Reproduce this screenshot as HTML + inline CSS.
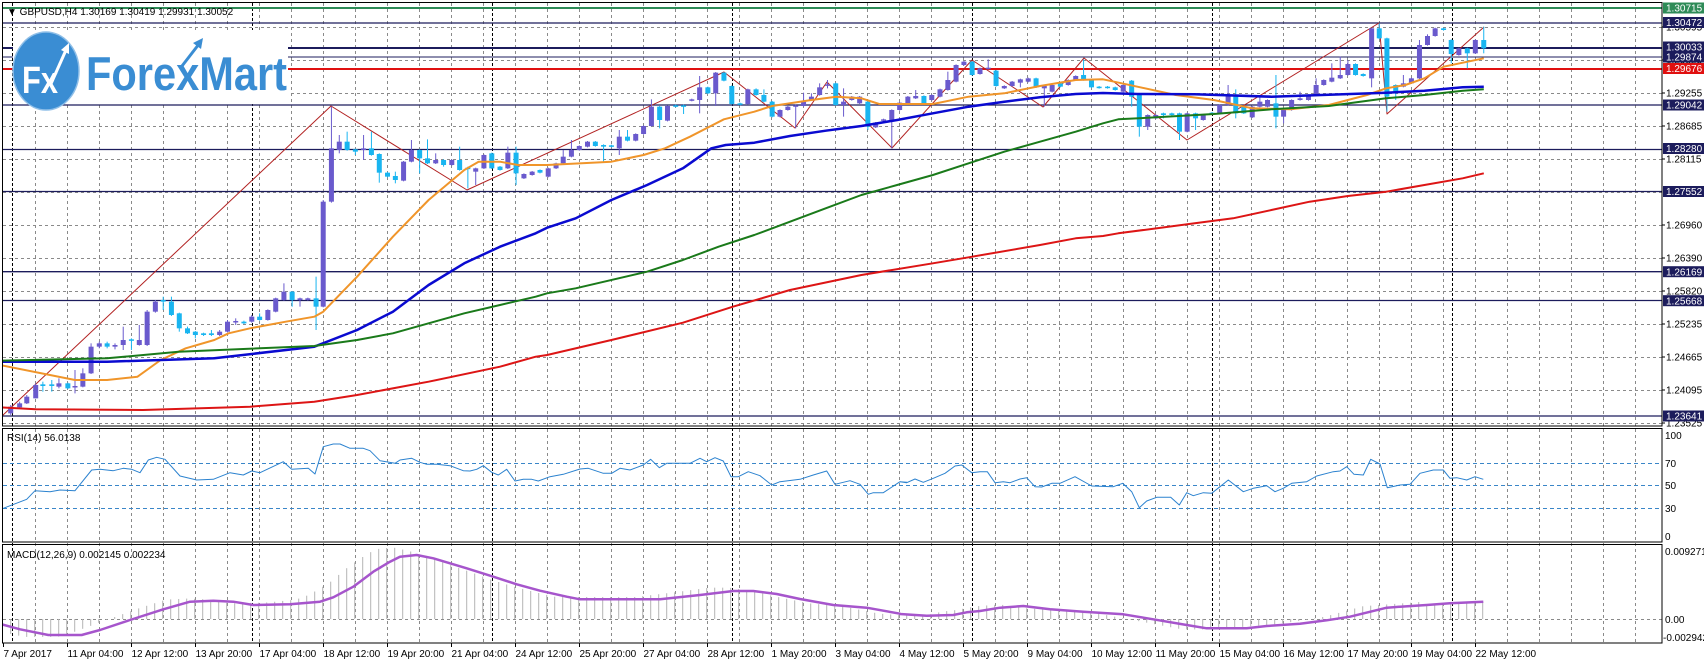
<!DOCTYPE html>
<html><head><meta charset="utf-8">
<style>
html,body{margin:0;padding:0;background:#fff;}
svg{display:block;font-family:"Liberation Sans",sans-serif;}
</style></head>
<body>
<svg id="s" width="1704" height="664" viewBox="0 0 1704 664" xmlns="http://www.w3.org/2000/svg">
<rect x="0" y="0" width="1704" height="664" fill="#fff"/>
<defs>
<clipPath id="cm"><rect x="3" y="3" width="1659" height="423"/></clipPath>
<clipPath id="cr"><rect x="3" y="428" width="1659" height="114"/></clipPath>
<clipPath id="cd"><rect x="3" y="545" width="1659" height="98"/></clipPath>
</defs>
<g id="grid"></g>
<g id="levels"></g>
<g id="logo">
<rect x="13" y="30" width="275" height="74" fill="#fff"/>
<ellipse cx="46" cy="71" rx="33" ry="39" fill="#3a8dd3" stroke="#8fbfe8" stroke-width="1.5"/>
<text x="22" y="93" font-size="38" font-weight="bold" fill="#fff" textLength="36" lengthAdjust="spacingAndGlyphs">Fx</text>
<path d="M50 86 L66 50" stroke="#fff" stroke-width="3" fill="none"/>
<path d="M61 50 L69 43 L69 54 Z" fill="#fff"/>
<text x="86" y="90" font-size="47" font-weight="bold" fill="#3a8dd3" textLength="201" lengthAdjust="spacingAndGlyphs">ForexMart</text>
<path d="M182 66 L199 44" stroke="#3a8dd3" stroke-width="3" fill="none"/>
<path d="M193 43 L203 38 L201 49 Z" fill="#3a8dd3"/>
</g>
<g id="main" clip-path="url(#cm)"></g>
<g id="rsi" clip-path="url(#cr)"></g>
<g id="macd" clip-path="url(#cd)"></g>
<g fill="none" stroke="#000" stroke-width="1">
<rect x="2.5" y="2.5" width="1659.5" height="423.5"/>
<rect x="2.5" y="428.5" width="1659.5" height="113.5"/>
<rect x="2.5" y="544.5" width="1659.5" height="98.5"/>
</g>
<text x="7" y="15" font-size="10" fill="#000">▼ GBPUSD,H4  1.30169 1.30419 1.29931 1.30052</text>
<text x="7" y="441" font-size="10" fill="#000">RSI(14) 56.0138</text>
<text x="7" y="558" font-size="10" fill="#000">MACD(12,26,9) 0.002145 0.002234</text>
<g id="axis" font-size="10" fill="#000"></g>
<g font-size="10" fill="#000">
<text x="1665" y="439">100</text>
<text x="1665" y="467">70</text>
<text x="1665" y="489">50</text>
<text x="1665" y="512">30</text>
<text x="1665" y="540">0</text>
<text x="1665" y="555">0.009271</text>
<text x="1665" y="623">0.00</text>
<text x="1663" y="641">-0.002942</text>
</g>
<g id="time" font-size="10" fill="#000"></g>
</svg>
<script>
var NS="http://www.w3.org/2000/svg";
function el(p,t,a,txt){var e=document.createElementNS(NS,t);for(var k in a)e.setAttribute(k,a[k]);if(txt!==undefined)e.textContent=txt;document.getElementById(p).appendChild(e);return e;}
var G="grid";
// vertical grid
for(var k=1;k<=51;k++){var x=3.5+32*k;el(G,"line",{x1:x,y1:3,x2:x,y2:643,stroke:"#8a8a8a","stroke-dasharray":"3,3","stroke-width":1});}
for(var k=0;k<=6;k++){var x=12.5+240*k;el(G,"line",{x1:x,y1:3,x2:x,y2:643,stroke:"#000","stroke-dasharray":"3,2","stroke-width":1});}
[27,60,93,126,159,192,225,258,291,324,357,390,423].forEach(function(y){el(G,"line",{x1:3,y1:y+.5,x2:1662,y2:y+.5,stroke:"#8a8a8a","stroke-dasharray":"3,3"});});
[463,485,508].forEach(function(y){el(G,"line",{x1:3,y1:y+.5,x2:1662,y2:y+.5,stroke:"#3a86c8","stroke-dasharray":"4,3"});});
el(G,"line",{x1:3,y1:619.5,x2:1662,y2:619.5,stroke:"#8a8a8a","stroke-dasharray":"3,3"});
// levels
var L="levels";
function hl(y,c,w){el(L,"line",{x1:3,y1:y,x2:1662,y2:y,stroke:c,"stroke-width":w});}
hl(8,"#2e8b57",2);hl(23,"#1c1c5c",1.3);hl(48,"#1c1c5c",2);hl(57,"#1c1c5c",1);hl(69,"#e01010",2);
hl(105,"#1c1c5c",1.3);hl(149.5,"#1c1c5c",1.3);hl(191.5,"#1c1c5c",1.3);hl(271.7,"#1c1c5c",1.3);hl(300.5,"#1c1c5c",1.3);hl(416,"#1c1c5c",1.3);
// conversions
function z6(p){return [p[0]/2.8,p[1]/3];}
function z7(p){return [540+p[0]/2.8,p[1]/3];}
function z8(p){return [1080+p[0]/2.613,p[1]/3];}
function pl(g,pts,c,w){el(g,"polyline",{points:pts.map(function(p){return p[0].toFixed(1)+","+p[1].toFixed(1);}).join(" "),fill:"none",stroke:c,"stroke-width":w,"stroke-linejoin":"round"});}
function cat(a6,a7,a8){var r=[];a6.forEach(function(p){r.push(z6(p));});a7.forEach(function(p){r.push(z7(p));});a8.forEach(function(p){r.push(z8(p));});r.sort(function(a,b){return a[0]-b[0];});return r;}
// zigzag
pl("main",[[2,416],[331,106],[467,190],[724,72],[795,128],[827,82],[892,148],[972,60],[1043,107],[1084,58],[1187,140],[1379,23],[1387,114],[1484,27]],"#b22222",1);
// candles
var c6=[[30,0,1220,1240,1215,1245],[55,0,1210,1222,1205,1225],[75,0,1190,1210,1185,1212],[100,0,1155,1195,1150,1195],[120,1,1153,1158,1145,1175],[145,1,1153,1158,1140,1175],[165,0,1150,1160,1135,1165],[190,1,1150,1165,1148,1167],[210,0,1158,1162,1110,1180],[232,0,1120,1160,1105,1162],[255,0,1040,1120,1030,1122],[278,0,1030,1040,1025,1045],[300,1,1030,1040,1025,1045],[322,0,1035,1040,1030,1048],[345,0,1020,1035,980,1050],[368,1,1018,1022,1015,1050],[390,0,1020,1035,975,1037],[412,0,935,1035,930,1038],[435,0,905,935,900,938],[457,1,900,905,890,930],[480,1,905,945,890,948],[502,1,940,985,938,995],[525,1,985,1000,980,1002],[547,1,995,1005,993,1015],[570,1,1000,1005,998,1008],[592,1,1000,1005,990,1008],[615,0,995,1005,990,1008],[637,0,965,995,960,997],[660,0,963,967,955,975],[683,1,965,970,962,972],[705,0,950,965,945,968],[727,1,950,960,940,962],[750,0,930,960,928,962],[772,0,895,935,893,937],[795,0,875,900,850,902],[818,1,875,900,873,920],[840,0,895,900,893,920],[862,0,895,900,893,902],[885,1,895,920,830,990],[905,0,605,920,600,922],[928,0,445,605,320,608],[950,0,425,450,405,460],[972,1,425,450,395,452],[995,1,448,455,446,465],[1018,0,445,450,405,480],[1040,1,445,465,395,467],[1062,1,462,518,460,548],[1085,1,518,530,516,532],[1107,1,528,540,515,550],[1130,0,485,542,483,544],[1152,0,450,485,420,487],[1175,1,450,475,448,520],[1197,1,475,490,418,492],[1220,0,480,490,460,492],[1242,1,480,495,478,500],[1265,0,480,495,478,497],[1287,1,480,510,440,512],[1310,1,503,507,500,565],[1332,0,505,515,503,555],[1355,0,465,505,463,507],[1377,1,460,505,458,507],[1400,1,500,510,498,512],[1422,0,458,505,440,507],[1445,1,458,520,440,555],[1467,0,522,535,520,537],[1490,0,515,525,513,527],[1512,1,510,518,508,520],[1535,0,505,530,503,532],[1557,0,490,505,488,507]];
var c7=[[65,0,470,490,450,492],[88,0,450,470,420,472],[110,0,438,450,436,452],[133,0,425,440,423,442],[155,1,425,438,423,440],[178,1,435,440,433,485],[200,1,436,440,434,442],[222,0,410,445,390,465],[245,1,410,422,390,424],[268,0,402,422,400,424],[290,0,378,402,376,404],[312,0,320,378,298,380],[335,1,320,360,318,385],[357,0,318,362,316,364],[380,1,316,320,314,322],[402,1,316,320,314,342],[425,0,298,302,296,304],[447,0,262,300,228,340],[470,1,262,280,260,282],[492,0,218,280,216,318],[515,1,218,242,216,244],[537,1,258,312,256,314],[560,1,310,314,308,316],[582,0,268,312,266,314],[605,1,268,285,265,287],[627,1,285,305,268,307],[650,1,305,350,303,352],[672,0,330,350,328,352],[694,0,320,330,318,332],[716,0,316,320,314,385],[738,0,305,318,278,320],[760,0,290,300,280,302],[783,0,262,285,250,287],[805,0,253,257,240,265],[828,1,250,315,248,317],[850,0,305,315,265,350],[873,0,290,300,288,302],[895,0,290,310,288,312],[918,1,305,380,303,390],[940,0,368,382,366,384],[962,0,358,362,356,364],[985,0,330,365,328,445],[1007,0,308,330,306,332],[1030,0,290,310,288,312],[1052,0,288,295,270,297],[1075,1,288,310,286,312],[1097,0,285,300,283,302],[1120,0,268,290,266,292],[1142,0,240,270,215,272],[1165,0,195,245,193,247],[1187,0,185,195,183,197],[1210,1,185,225,183,227],[1232,0,205,222,203,224],[1255,0,203,207,178,209],[1277,1,212,258,210,260],[1300,0,258,265,256,267],[1322,0,245,258,243,260],[1345,0,238,248,236,262],[1367,0,235,245,233,247],[1389,1,235,262,233,264],[1412,0,258,265,256,320],[1434,0,255,275,253,277],[1457,1,250,260,248,262],[1479,0,240,255,238,257],[1500,0,228,240,226,242],[1522,1,225,240,178,242]];
var c8=[[30,1,240,262,238,264],[50,1,260,264,258,266],[72,1,260,264,258,266],[92,1,262,270,260,272],[113,0,255,275,253,277],[135,1,242,290,240,320],[155,1,285,380,283,410],[177,0,345,380,343,390],[198,0,345,355,343,357],[218,1,340,345,338,355],[240,1,340,345,338,347],[260,1,340,395,338,420],[280,0,340,395,338,397],[302,1,340,355,338,390],[322,0,345,360,343,362],[345,1,338,342,336,344],[365,0,315,340,313,342],[387,0,285,315,255,317],[407,1,285,340,268,355],[428,1,320,340,318,342],[450,0,320,352,318,354],[470,0,305,320,290,322],[490,0,300,320,298,322],[512,1,310,350,225,385],[532,0,330,350,328,370],[553,0,300,330,298,332],[575,0,295,300,275,302],[597,0,285,300,283,302],[617,0,255,285,235,287],[637,0,240,255,238,257],[658,0,233,245,190,247],[680,0,225,235,170,237],[700,0,192,225,180,227],[720,1,192,225,190,227],[740,1,222,228,220,230],[762,0,85,235,83,262],[782,1,85,115,70,117],[802,1,115,290,113,335],[825,1,255,275,253,300],[845,0,250,260,225,262],[866,0,235,250,233,252],[887,0,135,235,120,237],[908,0,108,135,103,137],[928,0,85,108,83,110],[950,1,85,90,83,92],[970,1,120,162,118,190],[990,0,145,165,143,167],[1012,1,145,160,143,205],[1033,0,120,160,118,162],[1055,1,120,145,80,160]];
function candles(arr,f){arr.forEach(function(c){var x=f([c[0],0])[0];var col=c[1]?"#19b5f0":"#6a5acd";
 el("main","line",{x1:x,y1:c[4]/3,x2:x,y2:c[5]/3,stroke:col,"stroke-width":1});
 var t=c[2]/3,b=c[3]/3;if(b-t<1.5)b=t+1.5;
 el("main","rect",{x:x-2.5,y:t,width:5,height:b-t,fill:col});});}
candles(c6,z6);candles(c7,z7);candles(c8,z8);
// MAs
pl("main",cat([[0,1095],[210,1140],[300,1140],[385,1130],[450,1080],[520,1045],[600,1020],[640,1000],[700,985],[800,965],[880,950],[905,935],[1000,830],[1100,710],[1200,600],[1300,510],[1340,485],[1400,485],[1450,495],[1520,495]],[[20,495],[200,485],[290,465],[350,445],[420,410],[515,358],[600,335],[650,318],[760,300],[830,290],[900,295],[950,312],[1100,312],[1200,290],[1300,280],[1400,258],[1500,240]],[[60,238],[150,260],[250,285],[350,300],[450,325],[550,328],[650,315],[750,285],[800,265],[850,255],[900,235],[950,200],[1055,175]]),"#f0952a",2);
pl("main",cat([[0,1085],[300,1085],[600,1075],[880,1040],[1000,990],[1100,935],[1200,855],[1300,790],[1400,740],[1500,700]],[[20,683],[100,655],[200,600],[300,555],[400,505],[480,445],[520,435],[600,428],[700,408],[800,392],[900,378],[1000,360],[1100,340],[1200,320],[1300,305],[1400,292],[1500,282]],[[60,279],[150,282],[300,283],[500,290],[800,278],[900,272],[1000,262],[1055,260]]),"#0a0ad0",2.5);
pl("main",cat([[0,1082],[300,1075],[500,1055],[880,1038],[1000,1020],[1100,1000],[1200,970],[1300,940],[1400,915],[1500,890]],[[20,880],[100,865],[300,815],[400,780],[500,740],[600,705],[700,665],[800,625],[900,585],[1000,555],[1100,525],[1200,490],[1300,455],[1400,425],[1500,395]],[[60,370],[100,358],[200,352],[350,342],[500,328],[650,318],[800,295],[900,285],[1000,272],[1055,268]]),"#1a7a1a",2);
pl("main",cat([[0,1222],[100,1228],[400,1230],[700,1220],[880,1205],[1000,1185],[1200,1145],[1400,1100],[1500,1070]],[[20,1065],[200,1020],[400,968],[540,920],[700,870],[900,825],[1100,790],[1200,772],[1400,735],[1500,715]],[[60,708],[100,700],[300,670],[400,655],[500,630],[600,605],[700,588],[800,575],[900,555],[1000,535],[1055,520]]),"#dd1515",2);
// RSI
var r=[];
[[10,325],[80,298],[105,272],[150,275],[180,270],[225,272],[275,210],[300,208],[340,212],[370,205],[395,208],[420,218],[445,180],[470,172],[495,178],[540,228],[590,240],[640,238],[690,218],[730,225],[755,213],[780,218],[850,185],[875,208],[925,205],[945,222],[970,140],[1000,132],[1020,132],[1050,145],[1090,145],[1110,152],[1140,182],[1185,190]].forEach(function(p){r.push([p[0]/3,400+p[1]/3]);});
[[0,105],[35,100],[60,112],[80,118],[110,118],[150,122],[190,137],[210,138],[230,133],[250,122],[275,142],[295,150],[320,133],[345,168],[370,163],[395,163],[415,168],[450,155],[490,148],[540,132],[565,130],[610,145],[635,145],[660,130],[690,135],[730,120],[752,103],[778,128],[800,115],[870,115],[900,100],[920,110],[945,98],[970,108],[993,155],[1015,155],[1045,140],[1080,152],[1115,180],[1140,170],[1200,163],[1240,150],[1280,138],[1305,178],[1350,167],[1380,178],[1405,208],[1420,203],[1450,203],[1500,170],[1520,172]].forEach(function(p){r.push([400+p[0]/3,425+p[1]/3]);});
[[0,170],[20,173],[45,162],[70,172],[100,160],[135,145],[165,123],[185,120],[215,143],[240,140],[262,140],[285,173],[310,170],[330,173],[360,162],[380,158],[405,185],[425,186],[455,175],[480,175],[525,155],[575,183],[640,185],[668,175],[695,200],[718,248],[740,228],[770,217],[812,217],[838,240],[860,203],[880,212],[910,203],[935,205],[960,185],[985,165],[1030,200],[1060,190],[1100,182],[1125,200],[1150,190],[1175,175],[1220,170],[1250,153],[1300,140],[1320,138],[1340,125],[1362,148],[1390,150],[1412,103],[1440,117],[1462,188],[1490,182]].forEach(function(p){r.push([900+p[0]/3,425+p[1]/3]);});
[[0,195],[30,193],[60,160],[100,150],[130,150],[150,175],[170,173],[200,180],[225,170],[250,178]].forEach(function(p){r.push([1400+p[0]/3,420+p[1]/3]);});
pl("rsi",r,"#2b82cf",1);
// MACD signal
var m=[];
[[5,253],[60,268],[145,285],[245,285],[300,270],[390,240],[490,208],[570,185],[640,182],[700,185],[760,195],[870,193],[960,185],[1000,172],[1060,140],[1120,95],[1170,65],[1200,50]].forEach(function(p){m.push([p[0]/3,540+p[1]/3]);});
[[0,395],[50,390],[100,400],[200,430],[280,455],[350,478],[420,497],[500,515],[540,523],[780,523],[900,510],[1000,498],[1060,498],[1130,507],[1200,522],[1300,540],[1400,548],[1500,566]].forEach(function(p){m.push([400+p[0]/3,425+p[1]/3]);});
[[0,567],[80,572],[160,570],[200,562],[240,558],[300,548],[370,543],[450,553],[550,560],[670,568],[760,583],[860,600],[920,610],[1040,610],[1100,603],[1200,596],[1280,586],[1350,575],[1460,548]].forEach(function(p){m.push([900+p[0]/3,425+p[1]/3]);});
[[0,560],[80,555],[150,550],[250,545]].forEach(function(p){m.push([1400+p[0]/3,420+p[1]/3]);});
function sig(x){if(x<=m[0][0])return m[0][1];for(var i=1;i<m.length;i++){if(x<=m[i][0]){var a=m[i-1],b=m[i];return a[1]+(b[1]-a[1])*(x-a[0])/(b[0]-a[0]);}}return m[m.length-1][1];}
for(var x=10.7;x<=1485;x+=8){var v=619+(sig(Math.min(x+24,1470))-619)*1.12;if(x>1420)v=619+(sig(x)-619)*1.0;
 el("macd","line",{x1:x,y1:619,x2:x,y2:v,stroke:"#b4b4b4","stroke-width":1});}
pl("macd",m,"#a655cc",2.5);
// axis
var A="axis";
function box(y,txt,bg){el(A,"rect",{x:1663,y:y-5.5,width:41,height:11,fill:bg});el(A,"text",{x:1666,y:y+3.7,fill:"#fff"},txt);}
function lab(y,txt){el(A,"line",{x1:1662,y1:y,x2:1665,y2:y,stroke:"#000"});el(A,"text",{x:1666,y:y+3.7},txt);}
lab(27,"1.30595");lab(60,"1.29825");lab(93,"1.29255");lab(126,"1.28685");lab(159,"1.28115");lab(225,"1.26960");lab(258,"1.26390");lab(291,"1.25820");lab(324,"1.25235");lab(357,"1.24665");lab(390,"1.24095");lab(423,"1.23525");
box(8,"1.30715","#2e8b57");box(22.5,"1.30472","#1c1c5c");box(47,"1.30033","#1c1c5c");box(57,"1.29874","#1c1c5c");box(68.5,"1.29676","#e01010");
box(105,"1.29042","#1c1c5c");box(148.5,"1.28280","#1c1c5c");box(191.5,"1.27552","#1c1c5c");box(271.7,"1.26169","#1c1c5c");box(300.7,"1.25668","#1c1c5c");box(416,"1.23641","#1c1c5c");
// time axis
var T=["7 Apr 2017","11 Apr 04:00","12 Apr 12:00","13 Apr 20:00","17 Apr 04:00","18 Apr 12:00","19 Apr 20:00","21 Apr 04:00","24 Apr 12:00","25 Apr 20:00","27 Apr 04:00","28 Apr 12:00","1 May 20:00","3 May 04:00","4 May 12:00","5 May 20:00","9 May 04:00","10 May 12:00","11 May 20:00","15 May 04:00","16 May 12:00","17 May 20:00","19 May 04:00","22 May 12:00"];
T.forEach(function(t,i){var x=3.5+64*i;el("time","line",{x1:x,y1:643,x2:x,y2:647,stroke:"#000"});el("time","text",{x:x,y:657},t);});
</script>
</body></html>
